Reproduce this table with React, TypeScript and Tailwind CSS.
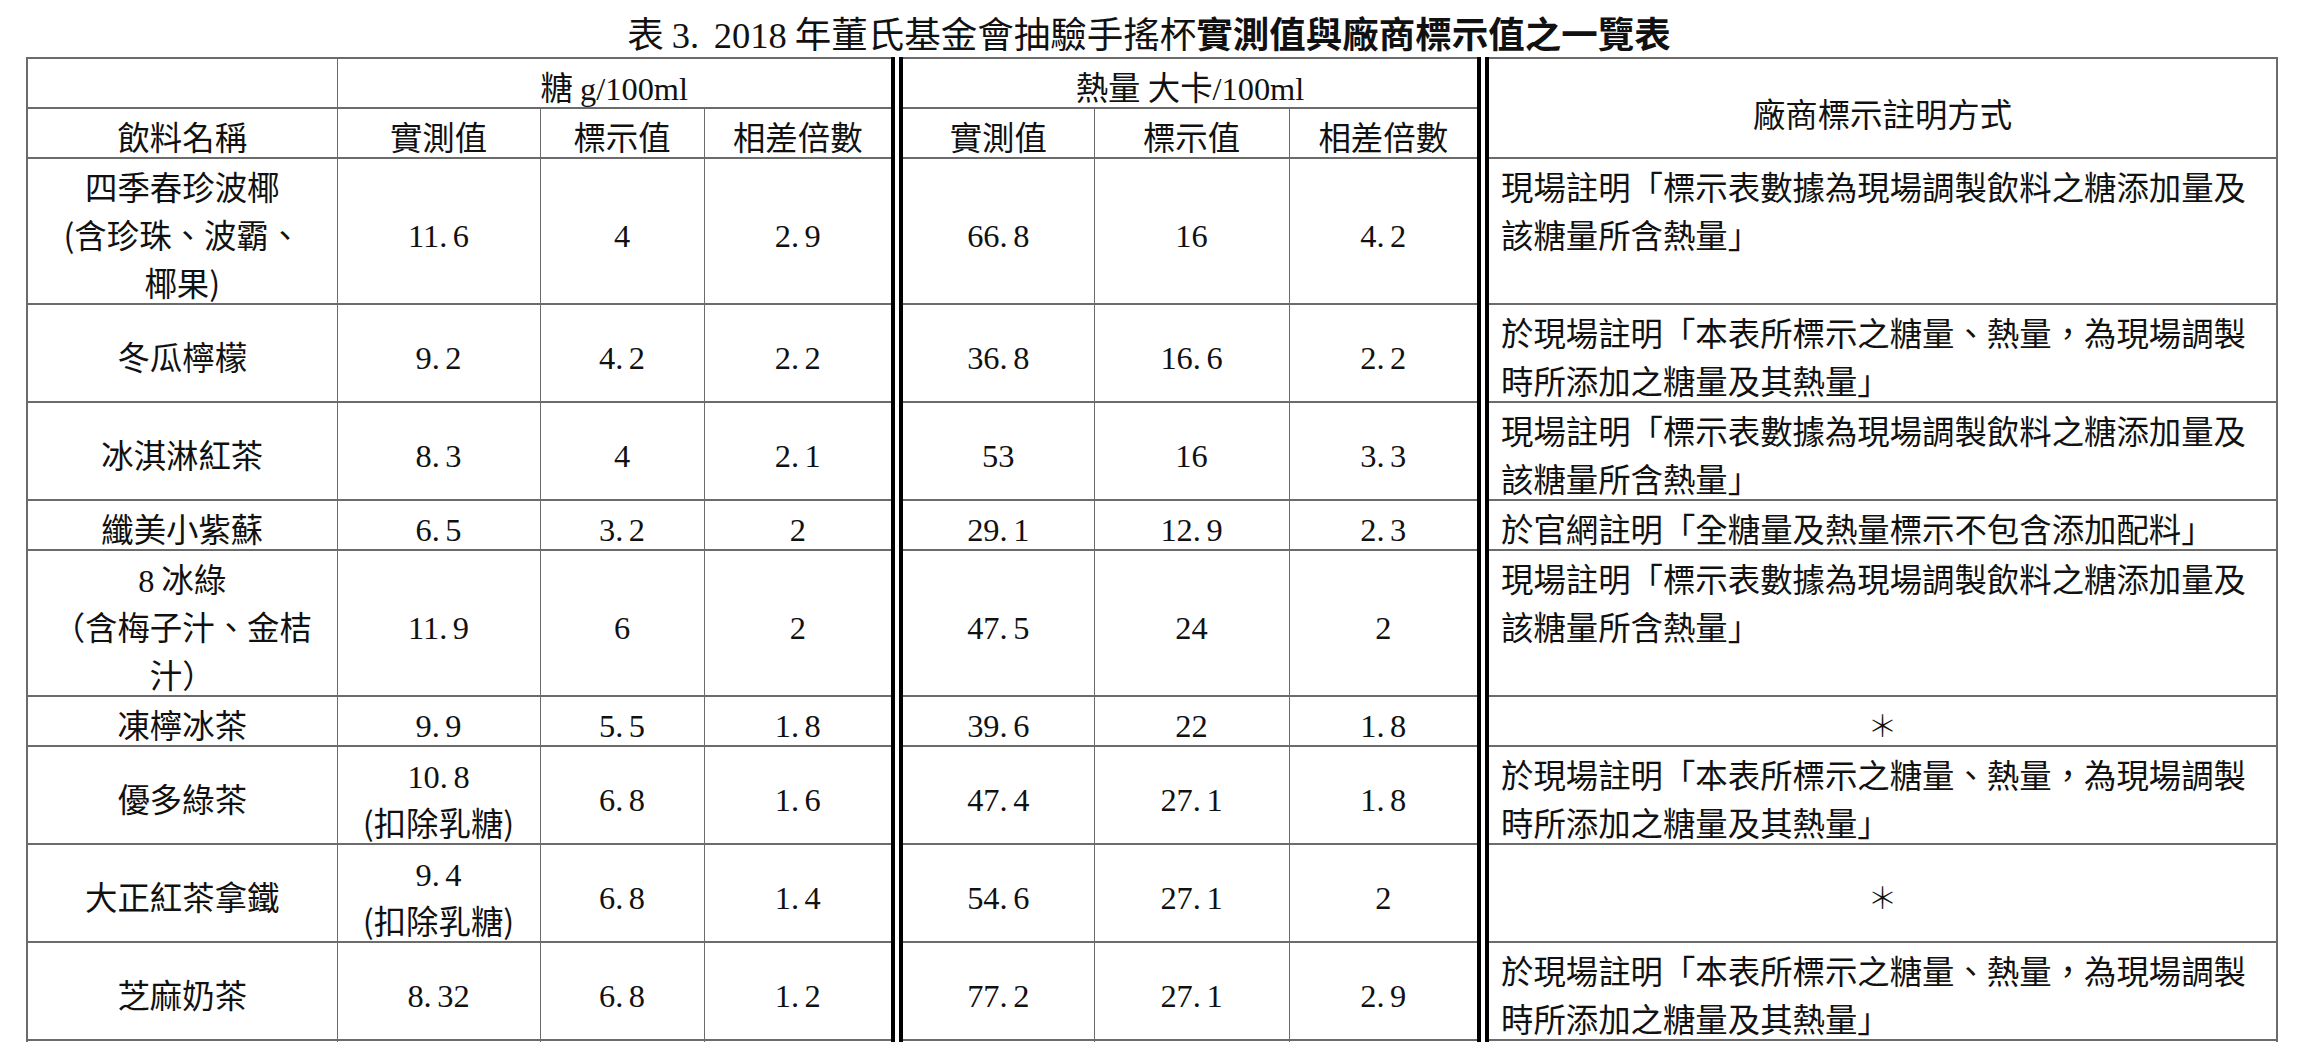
import React from "react";

const CJK = "[font-family:'Noto_Sans_CJK_TC','Noto_Sans_CJK_SC',sans-serif]";
const SERIF = "[font-family:'Liberation_Serif','Noto_Sans_CJK_TC',serif]";

const CELL = "p-0 border-t-2 border-b-2 border-[#6b6b6b] text-center align-middle";
const C_FIRST = "border-l-2 border-r";
const C_MID = "border-l border-r";
const C_DBL = "border-l border-r-[12px] border-double border-r-black";
const C_LAST = "border-l border-r-2";

function Num({ v }: { v: string }) {
  const parts = v.split(".");
  return (
    <span className={`${SERIF} leading-none`}>
      {parts[0]}
      {parts.length > 1 && (
        <>
          <span className="inline-block w-[0.42em] text-left">.</span>
          {parts[1]}
        </>
      )}
    </span>
  );
}

const NOTE_A = "現場註明「標示表數據為現場調製飲料之糖添加量及該糖量所含熱量」";
const NOTE_B = "於現場註明「本表所標示之糖量、熱量，為現場調製時所添加之糖量及其熱量」";
const NOTE_C = "於官網註明「全糖量及熱量標示不包含添加配料」";

type Row = {
  name: React.ReactNode;
  s1: React.ReactNode;
  s1Mixed?: boolean;
  s2: string;
  s3: string;
  k1: string;
  k2: string;
  k3: string;
  note: string | null;
  h: string;
};

const rows: Row[] = [
  {
    name: (
      <>
        四季春珍波椰
        <br />
        (含珍珠、波霸、
        <br />
        椰果)
      </>
    ),
    s1: "11.6",
    s2: "4",
    s3: "2.9",
    k1: "66.8",
    k2: "16",
    k3: "4.2",
    note: NOTE_A,
    h: "h-[146px]",
  },
  { name: "冬瓜檸檬", s1: "9.2", s2: "4.2", s3: "2.2", k1: "36.8", k2: "16.6", k3: "2.2", note: NOTE_B, h: "h-[97px]" },
  { name: "冰淇淋紅茶", s1: "8.3", s2: "4", s3: "2.1", k1: "53", k2: "16", k3: "3.3", note: NOTE_A, h: "h-[98px]" },
  { name: "纖美小紫蘇", s1: "6.5", s2: "3.2", s3: "2", k1: "29.1", k2: "12.9", k3: "2.3", note: NOTE_C, h: "h-[50px]" },
  {
    name: (
      <>
        <Num v="8" /> 冰綠
        <br />
        （含梅子汁、金桔
        <br />
        汁）
      </>
    ),
    s1: "11.9",
    s2: "6",
    s3: "2",
    k1: "47.5",
    k2: "24",
    k3: "2",
    note: NOTE_A,
    h: "h-[146px]",
  },
  { name: "凍檸冰茶", s1: "9.9", s2: "5.5", s3: "1.8", k1: "39.6", k2: "22", k3: "1.8", note: null, h: "h-[48px]" },
  {
    name: "優多綠茶",
    s1: (
      <>
        <Num v="10.8" />
        <br />
        (扣除乳糖)
      </>
    ),
    s1Mixed: true,
    s2: "6.8",
    s3: "1.6",
    k1: "47.4",
    k2: "27.1",
    k3: "1.8",
    note: NOTE_B,
    h: "h-[97px]",
  },
  {
    name: "大正紅茶拿鐵",
    s1: (
      <>
        <Num v="9.4" />
        <br />
        (扣除乳糖)
      </>
    ),
    s1Mixed: true,
    s2: "6.8",
    s3: "1.4",
    k1: "54.6",
    k2: "27.1",
    k3: "2",
    note: null,
    h: "h-[98px]",
  },
  { name: "芝麻奶茶", s1: "8.32", s2: "6.8", s3: "1.2", k1: "77.2", k2: "27.1", k3: "2.9", note: NOTE_B, h: "h-[98px]" },
];

function NumCell({ v, edge }: { v: string; edge: string }) {
  return (
    <td className={`${CELL} ${edge} ${SERIF}`}>
      <div className="leading-[48px] translate-y-[5px]">
        <Num v={v} />
      </div>
    </td>
  );
}

export default function App() {
  return (
    <div className="w-[2298px] h-[1042px] overflow-hidden bg-white text-[#111]">
      <div className={`pt-[11px] pb-[2px] text-center text-[36.5px] leading-[44px] ${CJK}`}>
        表 <Num v="3." /> <Num v="2018" /> 年董氏基金會抽驗手搖杯
        <span className="font-bold">實測值與廠商標示值之一覽表</span>
      </div>
      <table className={`ml-[26px] w-[2250px] table-fixed border-collapse text-[32.4px] ${CJK}`}>
        <colgroup>
          <col className="w-[310px]" />
          <col className="w-[203px]" />
          <col className="w-[164px]" />
          <col className="w-[193px]" />
          <col className="w-[197px]" />
          <col className="w-[195px]" />
          <col className="w-[194px]" />
          <col className="w-[794px]" />
        </colgroup>
        <thead>
          <tr className="h-[50px]">
            <td className={`${CELL} ${C_FIRST}`}></td>
            <td colSpan={3} className={`${CELL} ${C_DBL}`}>
              <div className="leading-[48px] translate-y-[3px]">
                糖 <span className={`${SERIF} leading-none`}>g/100ml</span>
              </div>
            </td>
            <td colSpan={3} className={`${CELL} ${C_DBL}`}>
              <div className="leading-[48px] translate-y-[3px]">
                熱量 <span className={`${SERIF} leading-none`}>大卡/100ml</span>
              </div>
            </td>
            <td rowSpan={2} className={`${CELL} ${C_LAST}`}>
              <div className="leading-[48px] translate-y-[5px]">廠商標示註明方式</div>
            </td>
          </tr>
          <tr className="h-[48px]">
            <td className={`${CELL} ${C_FIRST}`}>
              <div className="leading-[48px] translate-y-[3px]">飲料名稱</div>
            </td>
            <td className={`${CELL} ${C_MID}`}>
              <div className="leading-[48px] translate-y-[3px]">實測值</div>
            </td>
            <td className={`${CELL} ${C_MID}`}>
              <div className="leading-[48px] translate-y-[3px]">標示值</div>
            </td>
            <td className={`${CELL} ${C_DBL}`}>
              <div className="leading-[48px] translate-y-[3px]">相差倍數</div>
            </td>
            <td className={`${CELL} ${C_MID}`}>
              <div className="leading-[48px] translate-y-[3px]">實測值</div>
            </td>
            <td className={`${CELL} ${C_MID}`}>
              <div className="leading-[48px] translate-y-[3px]">標示值</div>
            </td>
            <td className={`${CELL} ${C_DBL}`}>
              <div className="leading-[48px] translate-y-[3px]">相差倍數</div>
            </td>
          </tr>
        </thead>
        <tbody>
          {rows.map((r, i) => (
            <tr key={i} className={r.h}>
              <td className={`${CELL} ${C_FIRST}`}>
                <div className="leading-[48px] translate-y-[3px]">{r.name}</div>
              </td>
              {r.s1Mixed ? (
                <td className={`${CELL} ${C_MID}`}>
                  <div className="leading-[48px] translate-y-[3px]">{r.s1}</div>
                </td>
              ) : (
                <NumCell v={r.s1 as string} edge={C_MID} />
              )}
              <NumCell v={r.s2} edge={C_MID} />
              <NumCell v={r.s3} edge={C_DBL} />
              <NumCell v={r.k1} edge={C_MID} />
              <NumCell v={r.k2} edge={C_MID} />
              <NumCell v={r.k3} edge={C_DBL} />
              {r.note ? (
                <td className={`${CELL} ${C_LAST} !align-top !text-left text-justify pl-3 pr-[21px]`}>
                  <div className="leading-[48px] translate-y-[3px]">{r.note}</div>
                </td>
              ) : (
                <td className={`${CELL} ${C_LAST}`}>
                  <div className="leading-[48px] translate-y-[3px] text-[30px] font-light">＊</div>
                </td>
              )}
            </tr>
          ))}
          <tr className="h-[98px]">
            <td className={`${CELL} ${C_FIRST}`}></td>
            <td className={`${CELL} ${C_MID}`}></td>
            <td className={`${CELL} ${C_MID}`}></td>
            <td className={`${CELL} ${C_DBL}`}></td>
            <td className={`${CELL} ${C_MID}`}></td>
            <td className={`${CELL} ${C_MID}`}></td>
            <td className={`${CELL} ${C_DBL}`}></td>
            <td className={`${CELL} ${C_LAST}`}></td>
          </tr>
        </tbody>
      </table>
    </div>
  );
}
